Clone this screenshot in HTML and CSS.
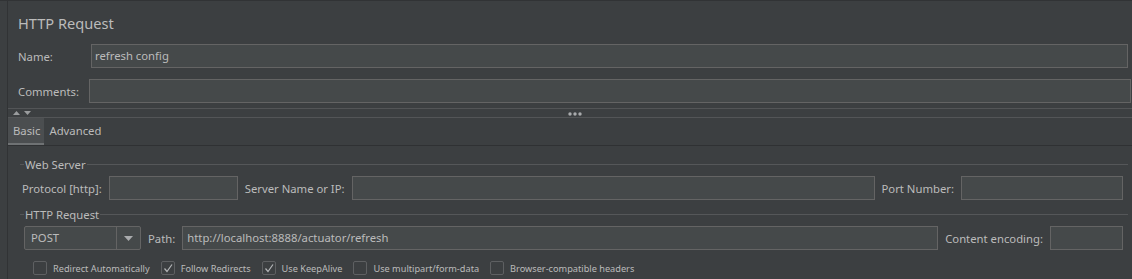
FILE: index.html
```html
<!DOCTYPE html>
<html lang="en">
<head>
    <meta charset="UTF-8">
    <title>HTTP Request</title>
    <link rel="stylesheet" href="styles.css">
</head>
<body>
    <div class="window">
        <div class="rail"></div>
        <div class="editor">
            <h1 class="title">HTTP Request</h1>

            <div class="field name-field">
                <label>Name:</label>
                <div class="text">refresh config</div>
            </div>
            <div class="field comments-field">
                <label>Comments:</label>
                <div class="text"></div>
            </div>

            <div class="splitter">
                <svg class="arrows" width="20" height="6" viewBox="0 0 20 6">
                    <polygon points="0,5 3.5,1 7,5" fill="#9a9c9e"/>
                    <polygon points="11,1 18,1 14.5,5" fill="#9a9c9e"/>
                </svg>
                <svg class="grip" width="14" height="4" viewBox="0 0 14 4">
                    <circle cx="2" cy="2" r="1.7" fill="#a9abad"/>
                    <circle cx="7" cy="2" r="1.7" fill="#a9abad"/>
                    <circle cx="12" cy="2" r="1.7" fill="#a9abad"/>
                </svg>
            </div>

            <div class="tabs">
                <span class="tab active">Basic</span>
                <span class="tab">Advanced</span>
            </div>

            <div class="tab-body">
                <div class="group-title"><span>Web Server</span></div>
                <div class="row">
                    <label>Protocol [http]:</label>
                    <div class="text protocol"></div>
                    <label>Server Name or IP:</label>
                    <div class="text grow"></div>
                    <label>Port Number:</label>
                    <div class="text port"></div>
                </div>

                <div class="group-title second"><span>HTTP Request</span></div>
                <div class="row">
                    <div class="combo">
                        <span class="combo-value">POST</span>
                        <span class="combo-btn">
                            <svg width="9" height="5" viewBox="0 0 9 5"><polygon points="0,0 9,0 4.5,5" fill="#a9abad"/></svg>
                        </span>
                    </div>
                    <label>Path:</label>
                    <div class="text grow path">http://localhost:8888/actuator/refresh</div>
                    <label>Content encoding:</label>
                    <div class="text encoding"></div>
                </div>

                <div class="checks">
                    <span class="check"><span class="box"></span>Redirect Automatically</span>
                    <span class="check"><span class="box"><svg width="12" height="12" viewBox="0 0 12 12"><polyline points="2.5,6.5 5,9.5 10,2.5" fill="none" stroke="#b4b6b8" stroke-width="1.2"/></svg></span>Follow Redirects</span>
                    <span class="check"><span class="box"><svg width="12" height="12" viewBox="0 0 12 12"><polyline points="2.5,6.5 5,9.5 10,2.5" fill="none" stroke="#b4b6b8" stroke-width="1.2"/></svg></span>Use KeepAlive</span>
                    <span class="check"><span class="box"></span>Use multipart/form-data</span>
                    <span class="check"><span class="box"></span>Browser-compatible headers</span>
                </div>
            </div>
        </div>
    </div>
</body>
</html>
```

FILE: styles.css
```css
body {
    margin: 0;
    background: #3c3f41;
    color: #bbbbbb;
    font-family: "Noto Sans", "Open Sans", sans-serif;
    font-size: 11.3px;
}
.window {
    display: flex;
    height: 279px;
    border-top: 1px solid #313335;
    box-sizing: border-box;
    overflow: hidden;
}
.rail {
    width: 7px;
    border-right: 1px solid #313335;
    flex-shrink: 0;
}
.editor {
    flex: 1;
    display: flex;
    flex-direction: column;
}
.title {
    margin: 0;
    padding: 8px 0 0 10px;
    height: 28px;
    line-height: 28px;
    font-size: 14.6px;
    font-weight: normal;
    color: #bbbbbb;
}
.field {
    display: flex;
    align-items: center;
    padding-left: 10px;
}
.field label {
    width: 73px;
    flex-shrink: 0;
}
.name-field {
    margin-top: 7px;
    padding-right: 4px;
}
.comments-field {
    margin-top: 11px;
    padding-right: 1px;
}
.comments-field label {
    width: 71px;
}
.text {
    height: 24px;
    box-sizing: border-box;
    background: #45494a;
    border: 1px solid #646464;
    line-height: 22px;
    padding: 0 3px;
    color: #bbbbbb;
    white-space: nowrap;
    overflow: hidden;
}
.field .text {
    flex: 1;
}
.splitter {
    margin-top: 5px;
    height: 8px;
    border-top: 1px solid #535557;
    border-bottom: 1px solid #535557;
    position: relative;
    display: flex;
    align-items: center;
}
.arrows {
    margin-left: 5px;
}
.grip {
    position: absolute;
    left: 560px;
    top: 3px;
}
.tabs {
    display: flex;
    height: 27px;
    border-bottom: 1px solid #2f3133;
}
.tab {
    padding: 0 5px;
    line-height: 25px;
}
.tab.active {
    background: #4b4e50;
    border-bottom: 2px solid #6f7274;
    padding-right: 4px;
}
.tab-body {
    padding: 10px 4px 0 12px;
}
.group-title {
    display: flex;
    align-items: center;
    height: 16px;
}
.group-title::before {
    content: "";
    width: 4px;
    border-top: 1px solid #555759;
}
.group-title::after {
    content: "";
    flex: 1;
    border-top: 1px solid #555759;
}
.group-title span {
    padding: 0 1px;
}
.group-title.second {
    margin-top: 6px;
}
.row {
    display: flex;
    align-items: center;
    margin-top: 4px;
    padding: 0 5px 0 2px;
    gap: 7px;
}
.row label {
    white-space: nowrap;
}
.protocol {
    width: 129px;
}
.grow {
    flex: 1;
}
.port {
    width: 162px;
}
.encoding {
    width: 73px;
}
.combo {
    display: flex;
    margin-left: 2px;
    width: 117px;
    height: 24px;
    box-sizing: border-box;
    border: 1px solid #646464;
    background: #45494a;
    border-radius: 2px;
}
.combo-value {
    flex: 1;
    padding-left: 6px;
    line-height: 22px;
}
.combo-btn {
    width: 23px;
    border-left: 1px solid #646464;
    display: flex;
    align-items: center;
    justify-content: center;
}
.path {
    padding-left: 4px;
}
.checks {
    display: flex;
    margin-top: 11px;
    padding-left: 13px;
    font-size: 9.2px;
}
.check {
    display: flex;
    align-items: center;
    margin-right: 11px;
}
.box {
    width: 14px;
    height: 14px;
    box-sizing: border-box;
    border: 1px solid #5e6062;
    background: #3c3f41;
    border-radius: 2px;
    margin-right: 6px;
    display: flex;
    align-items: center;
    justify-content: center;
}
```
